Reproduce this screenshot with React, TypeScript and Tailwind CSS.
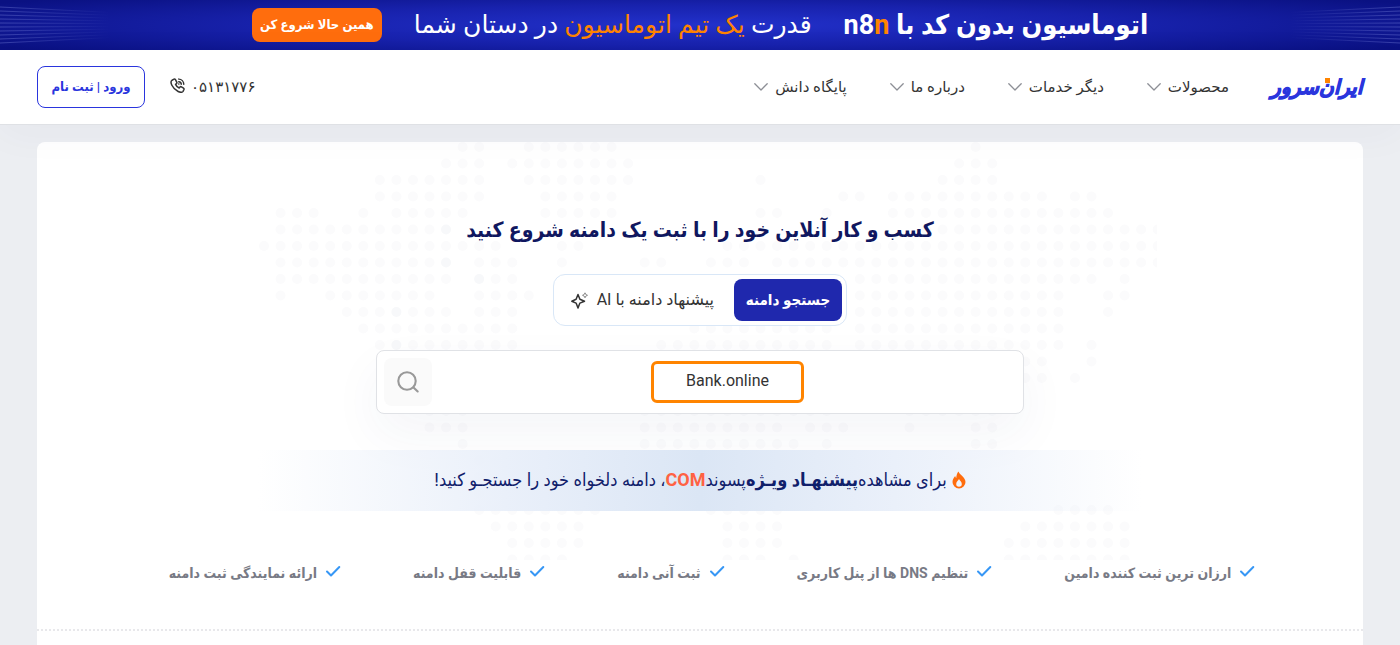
import React, { useState } from 'react';

interface Feature {
  label: string;
}

const navItems = ['محصولات', 'دیگر خدمات', 'درباره ما', 'پایگاه دانش'];

const features: Feature[] = [
  { label: 'ارزان ترین ثبت کننده دامین' },
  { label: 'تنظیم DNS ها از پنل کاربری' },
  { label: 'ثبت آنی دامنه' },
  { label: 'قابلیت قفل دامنه' },
  { label: 'ارائه نمایندگی ثبت دامنه' },
];

// Each row lists [from, to] column ranges of the dotted world map
const mapRows: number[][][] = [
  [[12, 13], [16, 21], [43, 43]],
  [[11, 13], [15, 22], [42, 44]],
  [[7, 13], [16, 22], [30, 30], [41, 44]],
  [[7, 13], [17, 21], [35, 36], [38, 47], [49, 50]],
  [[1, 3], [6, 6], [8, 12], [17, 21], [30, 31], [34, 34], [38, 51]],
  [[1, 11], [40, 54]],
  [[0, 14], [18, 19], [28, 54]],
  [[1, 11], [13, 15], [18, 18], [23, 24], [27, 29], [31, 54]],
  [[1, 11], [13, 15], [36, 50], [52, 52]],
  [[1, 1], [4, 10], [13, 16], [36, 48], [51, 52]],
  [[5, 11], [13, 15], [36, 48], [51, 51]],
  [[6, 15], [26, 34], [36, 48]],
  [[7, 15], [24, 34], [36, 48], [50, 50]],
  [[8, 14], [24, 34], [37, 47], [50, 50]],
  [[9, 13], [23, 34], [38, 47], [49, 49]],
  [[10, 12], [23, 34], [38, 44]],
  [[10, 12], [23, 34], [39, 44]],
  [[10, 12], [23, 31], [33, 35], [39, 39], [43, 44]],
  [[12, 12], [23, 32], [34, 34], [43, 44]],
  [[13, 17], [26, 32]],
  [[13, 18], [27, 32]],
  [[13, 19], [27, 32]],
  [[13, 20], [27, 31], [48, 51]],
  [[14, 19], [28, 31], [46, 52]],
  [[15, 19], [28, 31], [45, 52]],
  [[15, 18], [28, 30], [32, 32], [45, 52]],
];

const strongDots = ['5-11', '7-11', '8-13', '10-8', '12-8'];

function WorldMap() {
  const dots: React.ReactNode[] = [];
  mapRows.forEach((ranges, row) => {
    ranges.forEach(([from, to]) => {
      for (let col = from; col <= to; col++) {
        const key = `${row}-${col}`;
        dots.push(
          <circle
            key={key}
            cx={21 + col * 16.55}
            cy={5 + row * 16.5}
            r={5}
            fill={strongDots.includes(key) ? '#f7f8fa' : '#fbfbfc'}
          />
        );
      }
    });
  });
  return (
    <svg className="absolute top-0 left-1/2 -translate-x-1/2" width="914" height="418" viewBox="0 0 914 418" aria-hidden="true">
      {dots}
    </svg>
  );
}

function Chevron() {
  return (
    <svg className="w-[14px] h-[8px]" viewBox="0 0 14 8" fill="none" stroke="#8d8f96" strokeWidth="1.3" strokeLinecap="round" strokeLinejoin="round">
      <path d="M.8.8 7 7 13.2.8" />
    </svg>
  );
}

function Check() {
  return (
    <svg className="w-4 h-4 -mt-1" viewBox="0 0 16 16" fill="none" stroke="#3797f5" strokeWidth="2" strokeLinecap="round" strokeLinejoin="round">
      <path d="m2 8.5 4 4L14.3 4" />
    </svg>
  );
}

function BannerRays({ className }: { className: string }) {
  return (
    <svg className={className} width="110" height="50" viewBox="0 0 110 50" fill="none" aria-hidden="true">
      <defs>
        <linearGradient id="ray" x1="0" x2="110" y1="0" y2="0" gradientUnits="userSpaceOnUse">
          <stop stopColor="#8a94e8" stopOpacity=".45" />
          <stop offset="1" stopColor="#8a94e8" stopOpacity="0" />
        </linearGradient>
      </defs>
      {[7, 11, 15, 19, 23, 27, 31, 35, 39, 43].map(y => (
        <path key={y} d={`M0 ${y} 110 ${25 + (y - 25) * 0.7}`} stroke="url(#ray)" strokeWidth=".8" />
      ))}
    </svg>
  );
}

function Banner() {
  return (
    <div className="relative h-[50px] overflow-hidden bg-[#0a1182] bg-[radial-gradient(ellipse_60%_80%_at_50%_50%,#2231cb_0%,#1822ad_50%,#0a1182_100%)]">
      <BannerRays className="absolute left-0 top-0" />
      <BannerRays className="absolute right-0 top-0 -scale-x-100" />
      <div className="relative h-full flex items-center justify-center gap-8 text-white whitespace-nowrap">
        <strong className="text-[27px] leading-8 font-bold font-['Roboto','DejaVu_Sans_Condensed',sans-serif]">
          اتوماسیون بدون کد با <bdi>n8<span className="text-[#ff8400]">n</span></bdi>
        </strong>
        <span className="text-[25px] leading-8">
          قدرت <span className="text-[#ff8400]">یک تیم اتوماسیون</span> در دستان شما
        </span>
        <a href="#n8n" className="w-[130px] h-[34px] rounded-lg bg-[#ff6d0d] flex items-center justify-center text-[13px] font-bold font-['Roboto','DejaVu_Sans_Condensed',sans-serif]">
          همین حالا شروع کن
        </a>
      </div>
    </div>
  );
}

function Header() {
  return (
    <header className="relative bg-white border-b border-[#dfe1e5] shadow-[0_8px_40px_rgba(40,50,110,0.04)] z-10">
      <div className="h-[74px] px-[37px] flex items-center justify-between">
        <div className="flex items-center gap-[42px]">
          <a href="#home" className="relative text-xl leading-6 font-bold italic text-[#2a35dd] [-webkit-text-stroke:1px_#2a35dd] whitespace-nowrap">
            ایران‌سرور
            <span className="absolute left-[54px] top-[3px] w-[5px] h-[5px] bg-[#ff8400]" />
          </a>
          <nav>
            <ul className="flex items-center gap-[43px]">
              {navItems.map(item => (
                <li key={item}>
                  <button type="button" className="flex items-center gap-[7px] text-[15px] leading-6 text-[#333] whitespace-nowrap">
                    {item}
                    <Chevron />
                  </button>
                </li>
              ))}
            </ul>
          </nav>
        </div>
        <div className="flex items-center gap-[25px]">
          <a href="tel:05131776" className="flex items-center gap-[6px] text-[15px] leading-6 text-[#333]">
            ۰۵۱۳۱۷۷۶
            <svg className="w-[15px] h-[15px] mb-1" viewBox="0 0 24 24" fill="none" stroke="#333" strokeWidth="2.4" strokeLinecap="round" strokeLinejoin="round">
              <path d="M6.5 1.8 3.2 3.6C1.4 4.8 1.3 8 3 11.6c2.1 4.300 5.600 7.900 10 10 3.500 1.600 6.700 1.500 7.900-.3l1.400-2.900c.4-.9 0-1.700-.7-2.200l-3.300-2.100c-.8-.5-1.700-.3-2.300.4l-1.300 1.500c-2.400-1-4.700-3.300-5.800-5.800L10.400 9c.7-.6.8-1.500.4-2.300L8.700 2.500c-.5-.8-1.400-1.100-2.200-.7Z" />
              <path d="M14 6c2.200.1 4 1.900 4 4M14 1.800c4.500.1 8 3.700 8 8.200M14 9.700h.3" />
            </svg>
          </a>
          <a href="#login" className="w-[108px] h-[42px] rounded-lg border border-[#2a35dd] text-[#2a35dd] text-[13px] font-bold font-['Roboto','DejaVu_Sans_Condensed',sans-serif] flex items-center justify-center whitespace-nowrap">
            ورود | ثبت نام
          </a>
        </div>
      </div>
    </header>
  );
}

export default function App() {
  const [domain, setDomain] = useState('Bank.online');

  return (
    <div dir="rtl" className="min-h-screen flex flex-col bg-[#eceef2] font-['Roboto','DejaVu_Sans',sans-serif]">
      <Banner />
      <Header />
      <main className="flex-1 flex flex-col px-[37px] pt-[17px]">
        <section className="relative flex-1 rounded-t-lg bg-white">
          <WorldMap />
          <div className="relative flex flex-col items-center">
            <h1 className="mt-[70px] text-[21px] leading-9 font-bold font-['Roboto','DejaVu_Sans_Condensed',sans-serif] text-[#10175f] whitespace-nowrap">
              کسب و کار آنلاین خود را با ثبت یک دامنه شروع کنید
            </h1>

            <div className="mt-[26px] h-[52px] w-[294px] p-1 flex rounded-xl border border-[#d9e7f7] bg-white">
              <button type="button" className="w-[108px] rounded-lg bg-[#1f28ad] text-white text-[15px] font-bold font-['Roboto','DejaVu_Sans_Condensed',sans-serif] whitespace-nowrap">
                جستجو دامنه
              </button>
              <button type="button" className="flex-1 pr-5 flex items-center gap-[9px] text-base text-[#333] whitespace-nowrap">
                پیشنهاد دامنه با AI
                <svg className="w-[17px] h-[17px]" viewBox="0 0 17 17" fill="none" stroke="#333" strokeWidth="1.5" strokeLinejoin="round">
                  <path d="M7 2.500 8.900 7.300 13.500 9.200 8.900 11.100 7 16 5.100 11.100.8 9.200 5.100 7.300Z" />
                  <path d="M14 .8 14.800 2.500 16.500 3.300 14.800 4.100 14 5.800 13.200 4.100 11.500 3.300 13.200 2.500Z" stroke="#888" strokeWidth="1" />
                </svg>
              </button>
            </div>

            <form
              onSubmit={e => e.preventDefault()}
              className="mt-6 h-16 w-full max-w-[648px] pl-[7px] flex items-center rounded-lg border border-[#e0e2e6] bg-white shadow-[0_20px_50px_rgba(40,50,110,0.05)]"
            >
              <div className="relative flex-1 flex items-center justify-center">
                <input
                  type="text"
                  dir="ltr"
                  aria-label="نام دامنه"
                  value={domain}
                  onChange={e => setDomain(e.target.value)}
                  className="w-full h-12 pb-1 text-center text-base text-[#333] bg-transparent outline-none"
                />
                <span className="absolute w-[153px] h-[42px] rounded-md border-3 border-[#ff8400] pointer-events-none" />
              </div>
              <button type="submit" aria-label="جستجو" className="w-12 h-12 rounded-lg bg-[#fafafa] flex items-center justify-center">
                <svg className="w-6 h-6" viewBox="0 0 24 24" fill="none" stroke="#999" strokeWidth="2.100" strokeLinecap="round">
                  <circle cx="11" cy="11" r="8.700" />
                  <path d="m17.500 17.500 4.200 4" />
                </svg>
              </button>
            </form>

            <p className="mt-9 w-full max-w-[884px] h-[61px] pb-px flex items-center justify-center text-lg font-['Roboto','DejaVu_Sans_Condensed',sans-serif] text-[#10206b] whitespace-nowrap bg-[linear-gradient(90deg,rgba(255,255,255,0)_0%,#eaf0fa_28%,#dbe6f5_50%,#eaf0fa_72%,rgba(255,255,255,0)_100%)]">
              <svg className="w-[14px] h-[18px] ml-[5px]" viewBox="0 0 14 18" fill="#ff6d0d">
                <path fillRule="evenodd" d="M6.500.5C7 3.500 13.500 6 13.500 11a6.500 6.500 0 0 1-13 0c0-2.500 1.300-4.500 2.700-6 .2 1 .5 1.600 1.100 2C4.300 4.500 5 2 6.500.5ZM7 8c-.9 1.600-2.800 2.700-2.800 4.900a2.800 2.800 0 0 0 5.600 0C9.800 10.800 7.800 9.700 7 8Z" />
              </svg>
              <span>برای مشاهده</span>
              <b>پیشنهـاد ویـژه</b>
              <span>پسوند</span>
              <b className="text-[#ff6243]">COM</b>
              <span>، دامنه دلخواه خود را جستجـو کنید!</span>
            </p>

            <ul className="mt-[50px] pl-6 w-full flex items-center justify-center gap-[72px] text-sm leading-6 font-bold font-['Roboto','DejaVu_Sans_Condensed',sans-serif] text-[#787a85] whitespace-nowrap">
              {features.map(feature => (
                <li key={feature.label} className="flex items-center gap-2">
                  <Check />
                  {feature.label}
                </li>
              ))}
            </ul>
          </div>
          <hr className="relative mt-[44px] border-0 border-t-2 border-dotted border-[#e8e8eb]" />
        </section>
      </main>
    </div>
  );
}
